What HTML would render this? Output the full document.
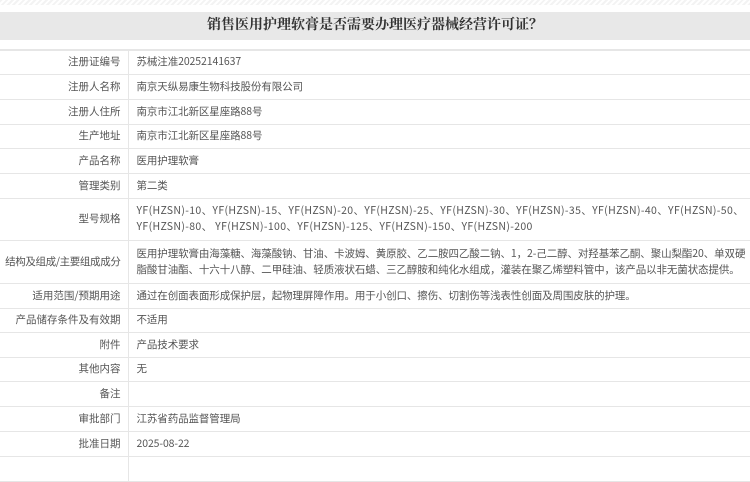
<!DOCTYPE html>
<html><head><meta charset="utf-8"><style>
body{margin:0;width:750px;height:462px;overflow:hidden;background:#fff;font-family:"Noto Sans CJK SC",sans-serif;}
.stripe{position:absolute;left:0;top:0;width:750px;height:5px;background:repeating-linear-gradient(135deg,#f3f3f3 0 2px,#fff 2px 4px);}
.title{position:absolute;left:0;top:12px;width:750px;height:28px;background:#e8e8e8;text-align:center;line-height:28px;font-family:"Liberation Serif","Noto Serif CJK SC",serif;font-weight:bold;font-size:14px;color:#333;}
table{position:absolute;left:0;top:49px;width:750px;border-collapse:collapse;table-layout:fixed;border-top:2px solid #e6e6e6;font-size:10.5px;color:#555;}
td{border-bottom:1px solid #e6e6e6;padding:0 0 0 8px;line-height:16px;overflow:hidden;}
td.l{width:120px;padding:0 7px 0 0;text-align:right;border-right:1px solid #e6e6e6;white-space:nowrap;}
td.r{padding-right:2px;letter-spacing:-0.1px;}
</style></head><body>
<div class="stripe"></div>
<div class="title">销售医用护理软膏是否需要办理医疗器械经营许可证？</div>
<table>
<colgroup><col style="width:128px"><col></colgroup>
<tr style="height:24px"><td class="l">注册证编号</td><td class="r">苏械注准20252141637</td></tr>
<tr style="height:25px"><td class="l">注册人名称</td><td class="r">南京天纵易康生物科技股份有限公司</td></tr>
<tr style="height:25px"><td class="l">注册人住所</td><td class="r">南京市江北新区星座路88号</td></tr>
<tr style="height:24px"><td class="l">生产地址</td><td class="r">南京市江北新区星座路88号</td></tr>
<tr style="height:25px"><td class="l">产品名称</td><td class="r">医用护理软膏</td></tr>
<tr style="height:25px"><td class="l">管理类别</td><td class="r">第二类</td></tr>
<tr style="height:42px"><td class="l">型号规格</td><td class="r" style="letter-spacing:0.35px;word-break:break-all">YF(HZSN)-10、YF(HZSN)-15、YF(HZSN)-20、YF(HZSN)-25、YF(HZSN)-30、YF(HZSN)-35、YF(HZSN)-40、YF(HZSN)-50、YF(HZSN)-80、 YF(HZSN)-100、YF(HZSN)-125、YF(HZSN)-150、YF(HZSN)-200</td></tr>
<tr style="height:43px"><td class="l" style="letter-spacing:-0.35px">结构及组成/主要组成成分</td><td class="r">医用护理软膏由海藻糖、海藻酸钠、甘油、卡波姆、黄原胶、乙二胺四乙酸二钠、1，2-己二醇、对羟基苯乙酮、聚山梨酯20、单双硬脂酸甘油酯、十六十八醇、二甲硅油、轻质液状石蜡、三乙醇胺和纯化水组成，灌装在聚乙烯塑料管中，该产品以非无菌状态提供。</td></tr>
<tr style="height:25px"><td class="l">适用范围/预期用途</td><td class="r">通过在创面表面形成保护层，起物理屏障作用。用于小创口、擦伤、切割伤等浅表性创面及周围皮肤的护理。</td></tr>
<tr style="height:24px"><td class="l">产品储存条件及有效期</td><td class="r">不适用</td></tr>
<tr style="height:25px"><td class="l">附件</td><td class="r">产品技术要求</td></tr>
<tr style="height:24px"><td class="l">其他内容</td><td class="r">无</td></tr>
<tr style="height:25px"><td class="l">备注</td><td class="r"></td></tr>
<tr style="height:25px"><td class="l">审批部门</td><td class="r">江苏省药品监督管理局</td></tr>
<tr style="height:25px"><td class="l">批准日期</td><td class="r">2025-08-22</td></tr>
<tr style="height:25px"><td class="l"></td><td class="r"></td></tr>
</table>
</body></html>
